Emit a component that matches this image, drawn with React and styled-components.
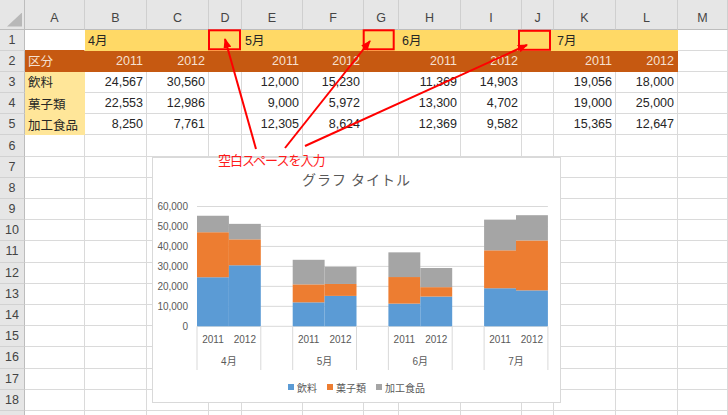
import React from 'react';
import styled, { createGlobalStyle } from 'styled-components';

const GlobalStyle = createGlobalStyle`
  html, body { margin: 0; padding: 0; background: #fff; }
  body { font-family: "Liberation Sans", "Noto Sans CJK JP", sans-serif; }
`;

const YEL = '#ffd966';
const ORG = '#c65911';
const LYEL = '#ffe699';
const GRID = '#dadada';

const Page = styled.div`
  position: relative;
  width: 728px;
  height: 415px;
  overflow: hidden;
  background: #fff;
`;

const Sheet = styled.div`
  display: grid;
  grid-template-columns: 25px 60px 62px 62px 33px 61px 61px 35px 62px 61px 32px 62px 62px 1fr;
  grid-template-rows: 29.5px repeat(19, 21.2px);
`;

const Corner = styled.div`
  position: relative;
  background: #e6e6e6;
  border-right: 1px solid #bdbdbd;
  border-bottom: 1px solid #bdbdbd;
  box-sizing: border-box;
  &::after {
    content: '';
    position: absolute;
    right: 2px;
    bottom: 2px;
    width: 15px;
    height: 14px;
    background: #b8b8b8;
    clip-path: polygon(100% 0, 100% 100%, 0 100%);
  }
`;

const ColHead = styled.div`
  box-sizing: border-box;
  background: #e6e6e6;
  border-right: 1px solid #cfcfcf;
  border-bottom: 1px solid #bdbdbd;
  color: #444;
  font-size: 12.5px;
  display: flex;
  align-items: flex-end;
  justify-content: center;
  padding-bottom: 4px;
`;

const RowHead = styled.div`
  box-sizing: border-box;
  background: #e6e6e6;
  border-right: 1px solid #bdbdbd;
  border-bottom: 1px solid #d2d2d2;
  color: #444;
  font-size: 12.5px;
  display: flex;
  align-items: center;
  justify-content: center;
`;

const Cell = styled.div`
  box-sizing: border-box;
  background: ${p => p.$fill || '#fff'};
  border-right: 1px solid ${p => p.$rb || p.$fill || GRID};
  border-bottom: 1px solid ${p => p.$bb || p.$fill || GRID};
  color: ${p => p.$ink || '#262626'};
  font-size: 12.5px;
  display: flex;
  align-items: center;
  justify-content: ${p => (p.$right ? 'flex-end' : 'flex-start')};
  padding: 0 3px;
  white-space: nowrap;
  overflow: hidden;
`;

const ChartBox = styled.div`
  position: absolute;
  left: 152px;
  top: 157px;
  width: 409px;
  height: 246px;
  box-sizing: border-box;
  border: 1px solid #d9d9d9;
  background: #fff;
  display: flex;
  flex-direction: column;
  z-index: 2;
`;

const ChartTitle = styled.div`
  height: 42px;
  display: flex;
  align-items: center;
  justify-content: center;
  font-family: "Noto Sans CJK JP", sans-serif;
  font-size: 14px;
  letter-spacing: 1px;
  color: #595959;
`;

const Plot = styled.svg`
  display: block;
  width: 407px;
  height: 176px;
`;

const Legend = styled.div`
  height: 22px;
  display: flex;
  align-items: center;
  justify-content: center;
  gap: 10px;
  font-family: "Noto Sans CJK JP", sans-serif;
  font-size: 10px;
  color: #595959;
`;

const LegendItem = styled.div`
  display: flex;
  align-items: center;
  gap: 3px;
`;

const Swatch = styled.span`
  width: 6px;
  height: 6px;
  background: ${p => p.$c};
`;

const Overlay = styled.svg`
  position: absolute;
  left: 0;
  top: 0;
  width: 728px;
  height: 415px;
  pointer-events: none;
  z-index: 3;
`;

const Note = styled.div`
  position: absolute;
  left: 218px;
  top: 152px;
  line-height: 15px;
  font-family: "Noto Sans CJK JP", sans-serif;
  font-size: 13px;
  letter-spacing: -1px;
  color: #ff1a1a;
  z-index: 4;
  white-space: nowrap;
`;

const LETTERS = ['A', 'B', 'C', 'D', 'E', 'F', 'G', 'H', 'I', 'J', 'K', 'L', 'M'];

const HEAD_INK = '#f6e0d0';

const data = [
  [24567, 30560, 12000, 15230, 11369, 14903, 19056, 18000],
  [22553, 12986, 9000, 5972, 13300, 4702, 19000, 25000],
  [8250, 7761, 12305, 8624, 12369, 9582, 15365, 12647],
];
const labels = ['飲料', '菓子類', '加工食品'];
const fmt = n => n.toLocaleString('en-US');

function buildRows() {
  const rows = [];
  const r1 = [{ rb: '#fff', bb: ORG }];
  ['4月', '5月', '6月', '7月'].forEach(m => {
    r1.push({ t: m, f: YEL }, { f: YEL }, { f: YEL });
  });
  r1.pop();
  r1.push({});
  rows.push(r1);
  const r2 = [{ t: '区分', f: ORG, ink: HEAD_INK }];
  for (let g = 0; g < 4; g++) {
    r2.push({ t: '2011', f: ORG, ink: HEAD_INK, right: true }, { t: '2012', f: ORG, ink: HEAD_INK, right: true });
    if (g < 3) r2.push({ f: ORG });
  }
  r2.push({});
  rows.push(r2);
  data.forEach((vals, i) => {
    const r = [{ t: labels[i], f: LYEL }];
    for (let g = 0; g < 4; g++) {
      r.push({ t: fmt(vals[g * 2]), right: true }, { t: fmt(vals[g * 2 + 1]), right: true });
      if (g < 3) r.push({});
    }
    r.push({});
    rows.push(r);
  });
  for (let i = 0; i < 14; i++) rows.push(Array.from({ length: 13 }, () => ({})));
  return rows;
}

const COLORS = ['#5b9bd5', '#ed7d31', '#a5a5a5'];
const X0 = 44;
const CW = 31.9;
const Y0 = 126.3;
const K = 119.8 / 60000;

function Chart() {
  const bars = [];
  for (let b = 0; b < 8; b++) {
    const g = Math.floor(b / 2);
    const idx = g * 3 + (b % 2);
    let acc = 0;
    for (let s = 0; s < 3; s++) {
      const v = data[s][b];
      const y1 = Y0 - (acc + v) * K;
      const y2 = Y0 - acc * K;
      bars.push(
        <rect key={`${b}-${s}`} x={X0 + idx * CW} y={y1} width={CW} height={y2 - y1} fill={COLORS[s]} />
      );
      acc += v;
    }
  }
  const ticks = [0, 10000, 20000, 30000, 40000, 50000, 60000];
  const seps = [];
  for (let g = 0; g < 4; g++) {
    seps.push(X0 + g * 3 * CW, X0 + (g * 3 + 2) * CW);
  }
  return (
    <ChartBox>
      <ChartTitle>グラフ タイトル</ChartTitle>
      <Plot viewBox="0 0 407 176">
        {ticks.map(t => (
          <g key={t}>
            <line x1={X0} x2={X0 + 11 * CW} y1={Y0 - t * K} y2={Y0 - t * K} stroke="#d9d9d9" strokeWidth="1" />
            <text x={35} y={Y0 - t * K} textAnchor="end" dominantBaseline="central" fontSize="10" fill="#595959" fontFamily="Liberation Sans, sans-serif">
              {fmt(t)}
            </text>
          </g>
        ))}
        {bars}
        {seps.map((x, i) => (
          <line key={i} x1={x} x2={x} y1={Y0} y2={170} stroke="#d9d9d9" strokeWidth="1" />
        ))}
        {[0, 1, 2, 3].map(g => (
          <g key={g} fontSize="10" fill="#595959" fontFamily="Liberation Sans, Noto Sans CJK JP, sans-serif" textAnchor="middle">
            <text x={X0 + (g * 3 + 0.5) * CW} y={139.3} dominantBaseline="central">2011</text>
            <text x={X0 + (g * 3 + 1.5) * CW} y={139.3} dominantBaseline="central">2012</text>
            <text x={X0 + (g * 3 + 1) * CW} y={161.7} dominantBaseline="central">{`${g + 4}月`}</text>
          </g>
        ))}
      </Plot>
      <Legend>
        {labels.map((l, i) => (
          <LegendItem key={l}>
            <Swatch $c={COLORS[i]} />
            {l}
          </LegendItem>
        ))}
      </Legend>
    </ChartBox>
  );
}

function Annotations() {
  const red = '#ff0000';
  return (
    <Overlay viewBox="0 0 728 415">
      <defs>
        <marker id="ah" markerUnits="userSpaceOnUse" markerWidth="10" markerHeight="8" refX="9" refY="4" orient="auto">
          <path d="M0,0 L10,4 L0,8 z" fill={red} />
        </marker>
      </defs>
      <rect x="209" y="30.3" width="31" height="19" fill="none" stroke={red} strokeWidth="2" />
      <rect x="363.7" y="30.3" width="30" height="19" fill="none" stroke={red} strokeWidth="2" />
      <rect x="519" y="30.8" width="31" height="19" fill="none" stroke={red} strokeWidth="2" />
      <line x1="256" y1="149" x2="225" y2="39" stroke={red} strokeWidth="2" markerEnd="url(#ah)" />
      <line x1="285" y1="148" x2="370" y2="41" stroke={red} strokeWidth="2" markerEnd="url(#ah)" />
      <line x1="305" y1="146" x2="527" y2="45" stroke={red} strokeWidth="2" markerEnd="url(#ah)" />
    </Overlay>
  );
}

export default function App() {
  const rows = buildRows();
  return (
    <Page>
      <GlobalStyle />
      <Sheet>
        <Corner />
        {LETTERS.map(l => (
          <ColHead key={l}>{l}</ColHead>
        ))}
        {rows.map((r, ri) => (
          <React.Fragment key={ri}>
            <RowHead>{ri < 18 ? ri + 1 : ''}</RowHead>
            {r.map((c, ci) => (
              <Cell key={ci} $fill={c.f} $ink={c.ink} $right={c.right} $rb={c.rb} $bb={c.bb}>
                {c.t}
              </Cell>
            ))}
          </React.Fragment>
        ))}
      </Sheet>
      <Chart />
      <Annotations />
      <Note>空白スペースを入力</Note>
    </Page>
  );
}
